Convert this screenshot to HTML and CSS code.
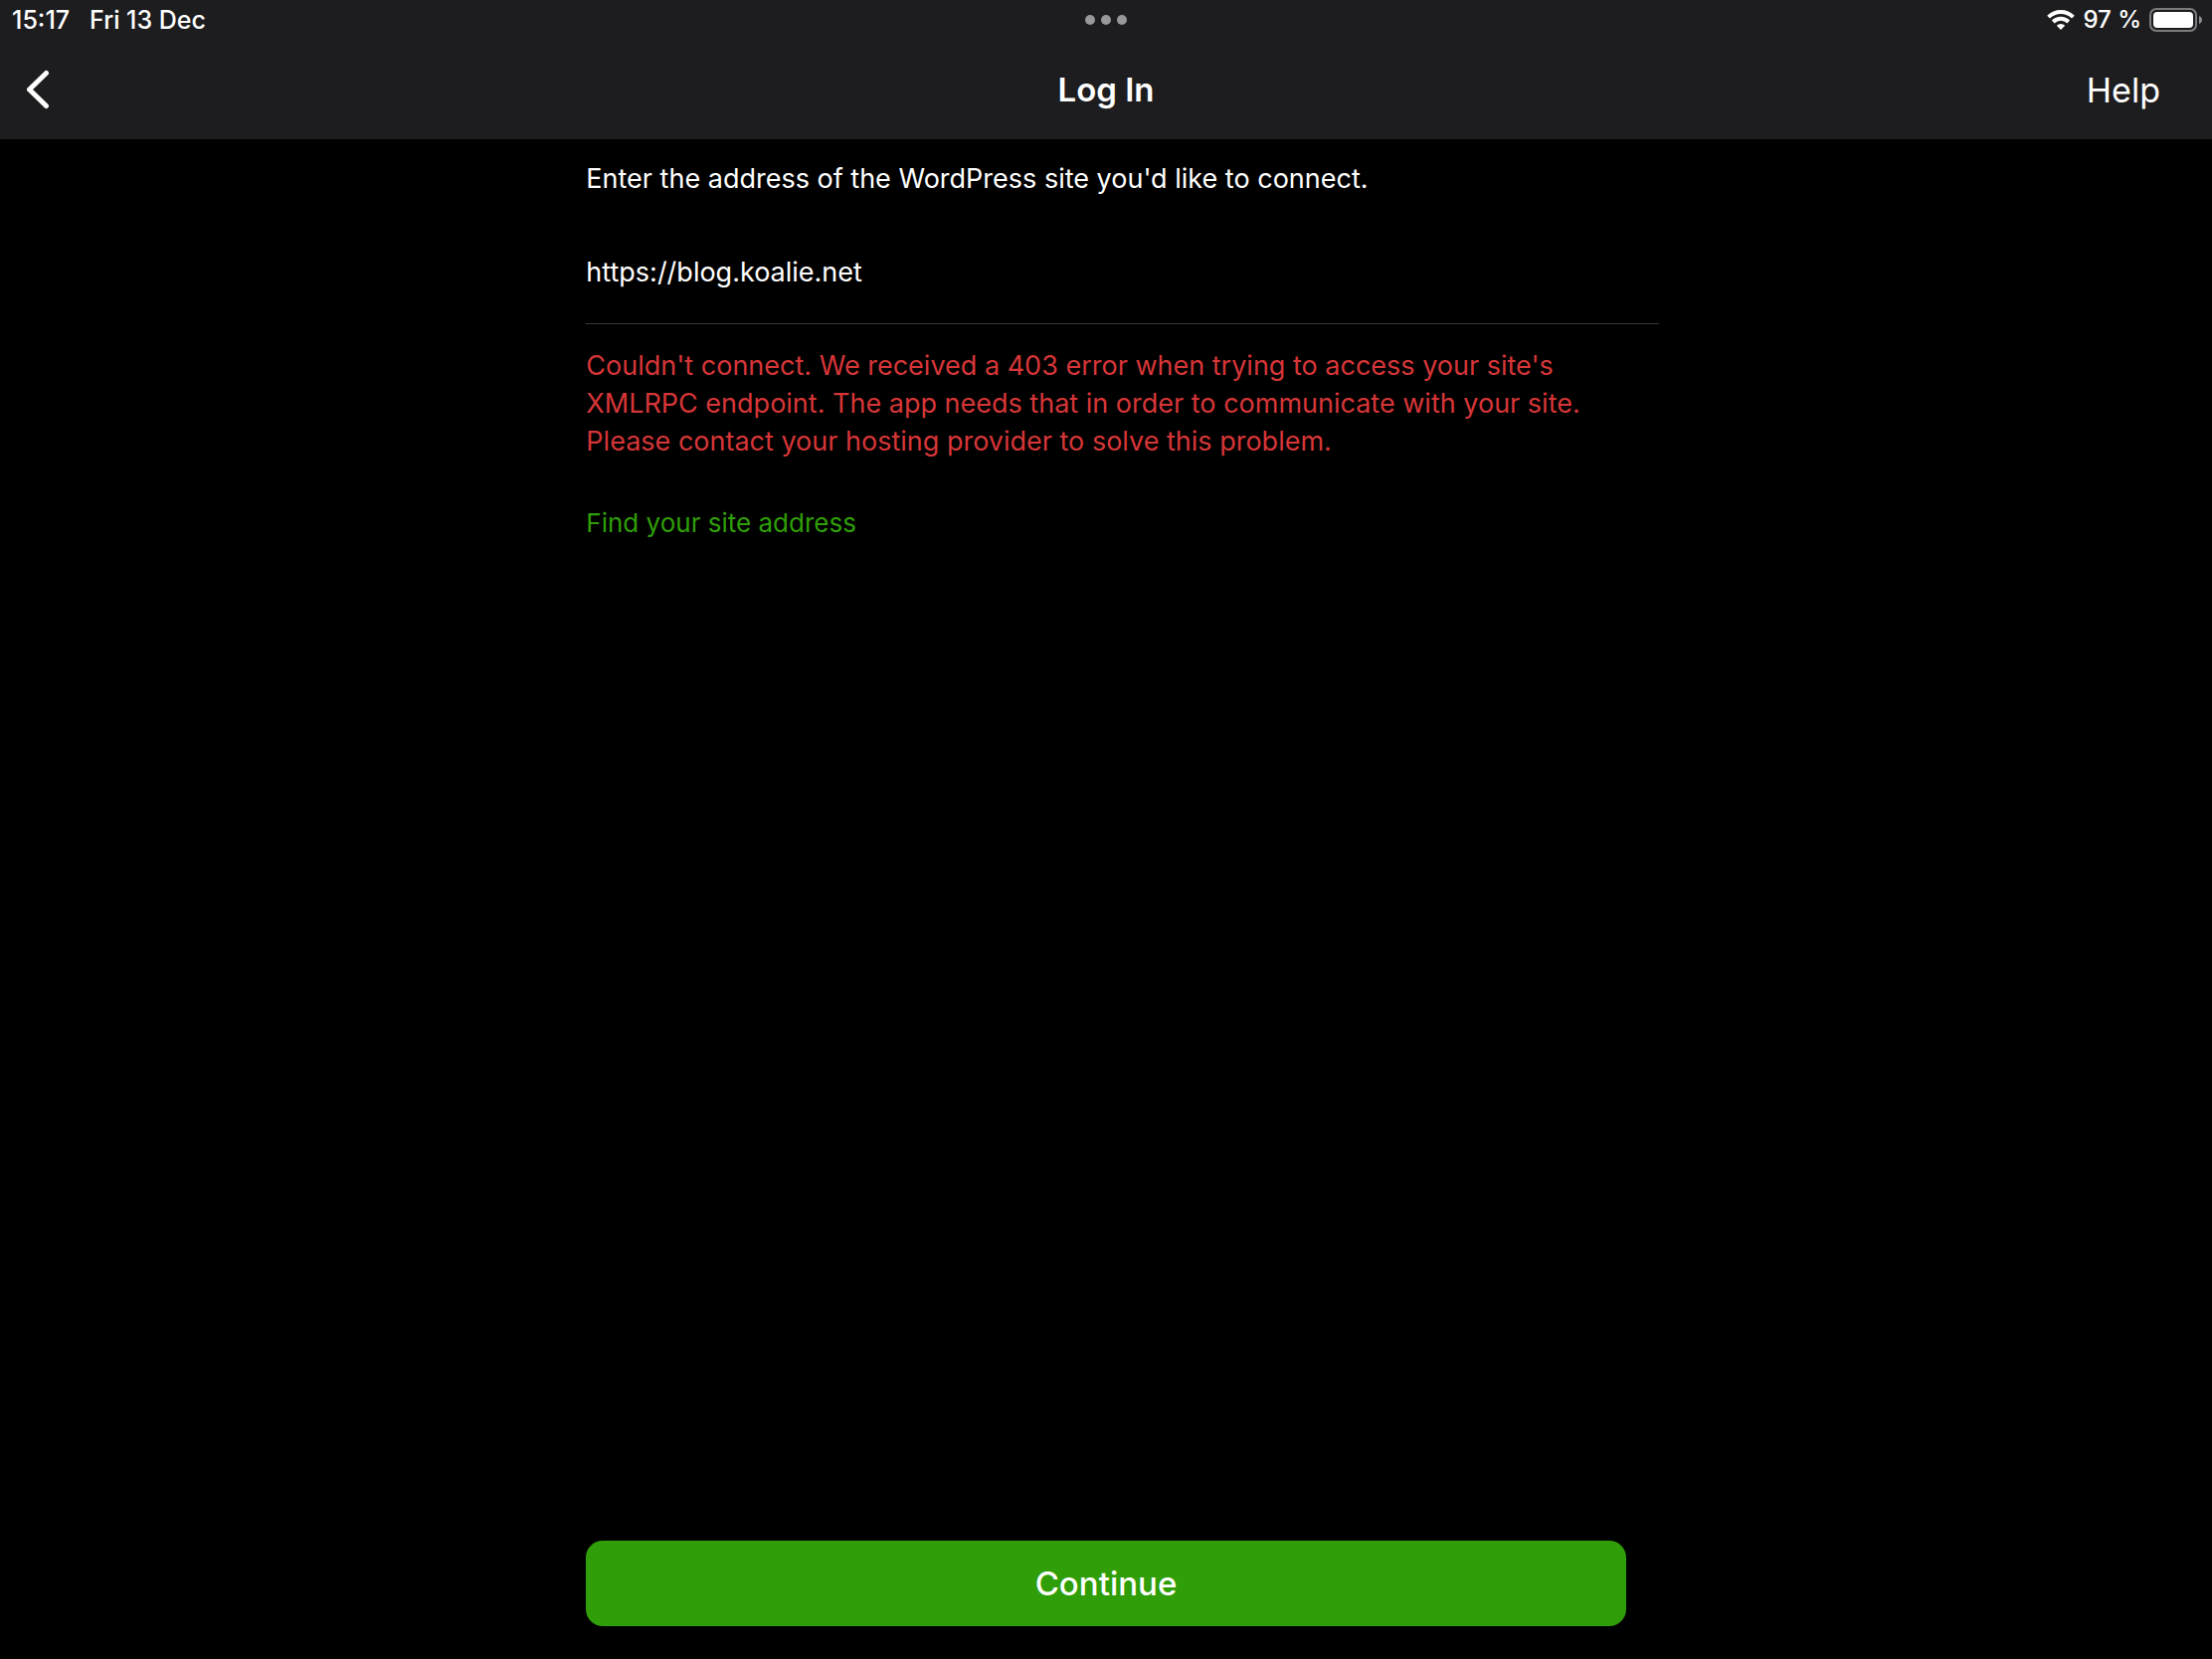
FILE: index.html
```html
<!DOCTYPE html>
<html lang="en">
<head>
    <meta charset="UTF-8">
    <meta name="viewport" content="width=device-width, initial-scale=1.0">
    <title>Log In</title>
    <link rel="stylesheet" href="styles.css">
</head>
<body>
    <header>
        <div class="status-bar">
            <div class="status-left">
                <span>15:17</span>
                <span>Fri 13 Dec</span>
            </div>
            <div class="status-dots">
                <i></i><i></i><i></i>
            </div>
            <div class="status-right">
                <svg class="wifi" width="28" height="20" viewBox="0 0 28 20" fill="none" stroke="#fff" stroke-width="4">
                    <path d="M1.6 7.2a17.6 17.6 0 0 1 24.8 0"/>
                    <path d="M6.3 12a11 11 0 0 1 15.4 0"/>
                    <path d="M14 20l-4.2-4.3a6 6 0 0 1 8.4 0z" fill="#fff" stroke="none"/>
                </svg>
                <span>97 %</span>
                <svg class="battery" width="53" height="24" viewBox="0 0 53 24">
                    <rect x="1" y="1" width="46" height="22" rx="6" fill="none" stroke="#7c7c7e" stroke-width="2"/>
                    <rect x="4" y="4" width="40" height="16" rx="4" fill="#fff"/>
                    <path d="M50 8c4 1.5 4 6.5 0 8z" fill="#8e8e90"/>
                </svg>
            </div>
        </div>
        <nav class="nav-bar">
            <button type="button" class="back-button" aria-label="Back">
                <svg width="24" height="40" viewBox="0 0 24 40" fill="none" stroke="#fff" stroke-width="5" stroke-linecap="round" stroke-linejoin="round">
                    <path d="M20.5 3.5L3.5 20L20.5 36.5"/>
                </svg>
            </button>
            <h1>Log In</h1>
            <button type="button" class="help-button">Help</button>
        </nav>
    </header>

    <form class="login-form">
        <label for="siteAddress">Enter the address of the WordPress site you'd like to connect.</label>
        <input type="text" id="siteAddress" name="siteAddress" value="https://blog.koalie.net">
        <p class="error">Couldn't connect. We received a 403 error when trying to access your site's XMLRPC endpoint. The app needs that in order to communicate with your site. Please contact your hosting provider to solve this problem.</p>
        <a href="#" class="find-link">Find your site address</a>
        <button type="submit" class="continue-button">Continue</button>
    </form>
</body>
</html>
```

FILE: styles.css
```css
* {
    box-sizing: border-box;
}

body {
    font-family: Inter, 'Helvetica Neue', 'Liberation Sans', sans-serif;
    margin: 0;
    min-height: 100vh;
    display: flex;
    flex-direction: column;
    background-color: #000;
    color: #fff;
    font-size: 27px;
    line-height: 38px;
}

button, input {
    font-family: inherit;
    color: inherit;
    background: none;
    border: none;
    padding: 0;
}

button {
    cursor: pointer;
}

header {
    background-color: #1d1d1f;
}

.status-bar, .nav-bar {
    display: grid;
    grid-template-columns: 1fr auto 1fr;
    align-items: center;
}

.status-bar {
    height: 40px;
    padding: 0 10px;
    font-size: 24px;
    font-weight: 500;
}

.status-left {
    display: flex;
    gap: 20px;
    padding-left: 2px;
    font-size: 25px;
}

.status-dots {
    display: flex;
    gap: 6px;
}

.status-dots i {
    width: 10px;
    height: 10px;
    border-radius: 50%;
    background-color: #98989c;
}

.status-right {
    display: flex;
    align-items: center;
    justify-content: flex-end;
    gap: 8px;
}

.nav-bar {
    height: 100px;
    padding: 0 26px;
}

.nav-bar h1 {
    margin: 0;
    font-size: 33px;
    font-weight: 600;
}

.back-button {
    display: flex;
    justify-self: start;
}

.help-button {
    justify-self: end;
    margin-right: 26px;
    font-size: 34px;
}

.login-form {
    flex: 1;
    display: flex;
    flex-direction: column;
    width: 47%;
    margin: 0 auto;
    padding: 21px 0 33px;
}

/* the field's underline runs on past the text column */
.login-form input {
    width: calc(100% + 33px);
    height: 107px;
    margin-top: 20px;
    padding-top: 2px;
    border-bottom: 1px solid #38383a;
    font-size: 27px;
    outline: none;
}

.error {
    margin: 23px 0 44px;
    color: #d63638;
}

.find-link {
    align-self: flex-start;
    color: #2f9e08;
    font-size: 26px;
    text-decoration: none;
}

.continue-button {
    height: 86px;
    margin-top: auto;
    border-radius: 17px;
    background-color: #2f9e08;
    font-size: 33px;
    font-weight: 500;
}
```
